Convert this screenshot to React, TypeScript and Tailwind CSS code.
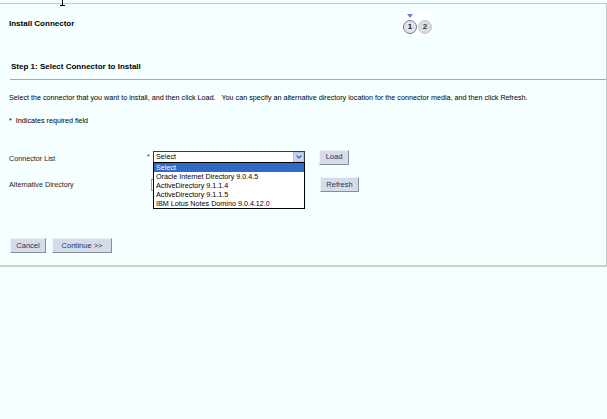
import React from "react";

const font = "font-['Liberation_Sans',Arial,sans-serif]";

function Btn({ label, w }: { label: string; w: string }) {
  return (
    <button
      className={`${w} h-[15px] flex items-center justify-center text-[7.5px] leading-none text-[#22395e] bg-[#d5dbe9] border border-t-[#eef1f7] border-l-[#eef1f7] border-r-[#858d9e] border-b-[#858d9e]`}
    >
      {label}
    </button>
  );
}

function StepIndicator() {
  return (
    <div className="relative w-[33px] h-[23px] bg-white">
      <div className="absolute left-[6px] top-[2px] w-0 h-0 border-l-[3px] border-r-[3px] border-t-[4px] border-l-transparent border-r-transparent border-t-[#6a7fe6]" />
      <div className="absolute left-[2px] top-[8px] flex gap-[1px]">
        <div className="w-[14px] h-[14px] rounded-full border border-[#5d7eab] bg-[#e4e4e4] flex items-center justify-center text-[8px] font-bold leading-none text-[#222]">
          1
        </div>
        <div className="w-[14px] h-[14px] rounded-full border border-[#c4c4c4] bg-[#dcdcdc] flex items-center justify-center text-[8px] font-bold leading-none text-[#333]">
          2
        </div>
      </div>
    </div>
  );
}

export default function App() {
  const options = [
    "Oracle Internet Directory 9.0.4.5",
    "ActiveDirectory 9.1.1.4",
    "ActiveDirectory 9.1.1.5",
    "IBM Lotus Notes Domino 9.0.4.12.0",
  ];

  return (
    <div className={`relative w-[607px] h-[419px] overflow-hidden bg-[#f5ffff] text-black ${font}`}>
      {/* text cursor */}
      <svg className="absolute left-[59px] top-0" width="7" height="7" viewBox="0 0 7 7">
        <path d="M3.5 0 V5.5 M1 5.5 H6" stroke="#000" strokeWidth="1" fill="none" />
      </svg>

      <div className="pt-[3px]">
        <div className="h-[264px] border-t border-t-[#c8c8c8] border-r border-r-[#c8c8c8] border-b-2 border-b-[#d4d0c8] flex flex-col">
          {/* header */}
          <div className="flex h-[58px]">
            <div className="w-[401px] pl-[9px] pt-[15px] text-[8px] leading-[10px] font-bold">
              Install Connector
            </div>
            <div className="pt-[8px]">
              <StepIndicator />
            </div>
          </div>

          {/* step heading */}
          <div className="pl-[11px] text-[8px] leading-[10px] font-bold">
            Step 1: Select Connector to Install
          </div>
          <div className="ml-[10px] mt-[7px] border-t border-t-[#a9a9a9]" />

          <p className="pl-[9px] mt-[13px] text-[7.2px] leading-[10px] text-black">
            Select the connector that you want to install, and then click Load.&nbsp;&nbsp; You can specify an
            alternative directory location for the connector media, and then click Refresh.
          </p>
          <p className="pl-[9px] mt-[13px] text-[7.2px] leading-[10px] text-black">
            *&nbsp; Indicates required field
          </p>

          {/* form */}
          <div className="mt-[24px] pl-[9px] flex flex-col gap-[13px]">
            <div className="flex items-center h-[14px]">
              <div className="w-[138px] text-[7.2px] leading-[10px] pt-[3px] text-[#222]">Connector List</div>
              <div className="w-[6px] text-[7px] leading-none text-[#333] self-start pt-[3px]">*</div>
              <div className="relative w-[152px] h-[12px] border border-[#3c3c3c] bg-white flex items-center">
                <span className="flex-1 pl-[2px] text-[7.2px] leading-none">Select</span>
                <div className="w-[11px] h-[10px] bg-[#c6d6f8] border border-[#aec2ee] flex items-center justify-center">
                  <svg width="6" height="4" viewBox="0 0 6 4">
                    <path d="M0.5 0.5 L3 3 L5.5 0.5" stroke="#4a5f86" strokeWidth="1.2" fill="none" />
                  </svg>
                </div>
                {/* open dropdown */}
                <div className="absolute left-[-1px] top-[10px] z-10 w-[152px] border border-black bg-white">
                  <div className="h-[9px] pl-[2px] bg-[#316ac5] text-white text-[7.2px] leading-[9px]">Select</div>
                  {options.map((o) => (
                    <div key={o} className="h-[9px] pl-[2px] text-[7.2px] leading-[9px] text-black">
                      {o}
                    </div>
                  ))}
                </div>
              </div>
              <div className="ml-[14px]">
                <Btn label="Load" w="w-[30px]" />
              </div>
            </div>

            <div className="flex items-center h-[15px]">
              <div className="w-[142px] text-[7.2px] leading-[10px] text-[#222]">Alternative Directory</div>
              <div className="w-[154px] h-[12px] border border-[#a0a0a0] border-t-[#7a7a7a] bg-white" />
              <div className="ml-[15px]">
                <Btn label="Refresh" w="w-[39px]" />
              </div>
            </div>
          </div>

          <div className="mt-[46px] pl-[10px] flex gap-[6px]">
            <Btn label="Cancel" w="w-[36px]" />
            <Btn label="Continue >>" w="w-[60px]" />
          </div>
        </div>
      </div>
    </div>
  );
}
